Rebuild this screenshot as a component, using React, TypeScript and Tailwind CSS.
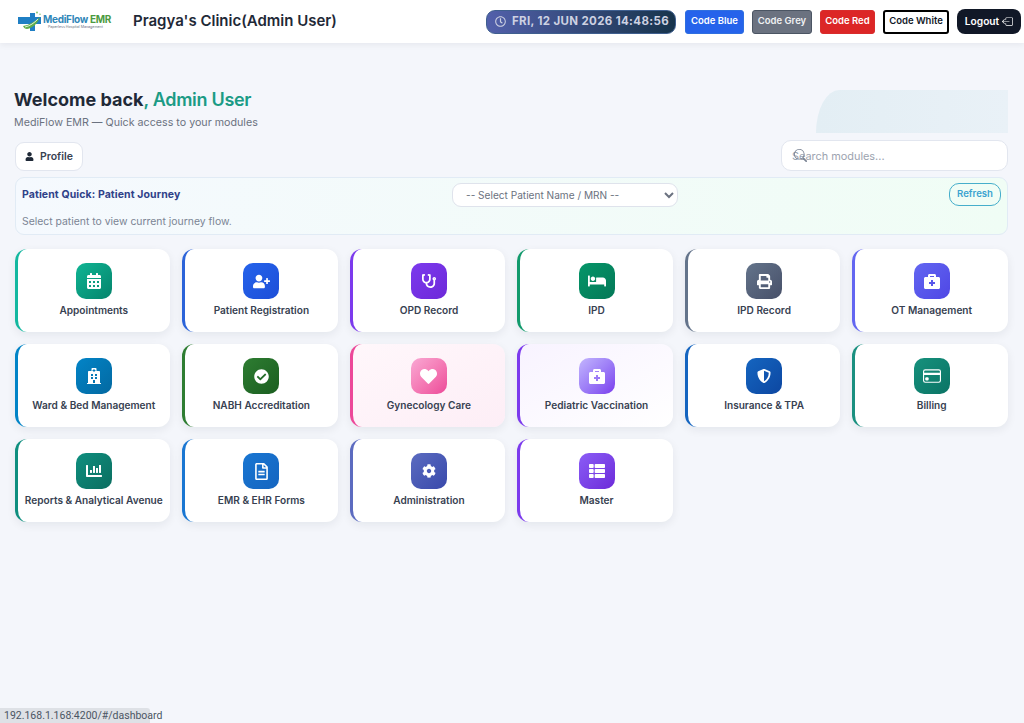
import type { IconType } from "react-icons";
import {
  FaBed,
  FaBriefcaseMedical,
  FaCalendarAlt,
  FaChartBar,
  FaCheckCircle,
  FaCog,
  FaHeart,
  FaHospital,
  FaPrint,
  FaRegClock,
  FaRegFileAlt,
  FaShieldAlt,
  FaStethoscope,
  FaThList,
  FaUser,
  FaUserPlus,
} from "react-icons/fa";
import { BsBoxArrowLeft, BsCreditCard, BsSearch } from "react-icons/bs";

type Module = {
  label: string;
  icon: IconType;
  size: number;
  border: string;
  tile: string;
  bg?: string;
};

const modules: Module[] = [
  { label: "Appointments", icon: FaCalendarAlt, size: 16, border: "border-l-[#14b8a0]", tile: "from-[#10b594] to-[#05846c]" },
  { label: "Patient Registration", icon: FaUserPlus, size: 17, border: "border-l-[#2b63d9]", tile: "from-[#2563eb] to-[#1d4ed8]" },
  { label: "OPD Record", icon: FaStethoscope, size: 14, border: "border-l-[#7c3aed]", tile: "from-[#7c3aed] to-[#6d28d9]" },
  { label: "IPD", icon: FaBed, size: 18, border: "border-l-[#129a6c]", tile: "from-[#059669] to-[#047857]" },
  { label: "IPD Record", icon: FaPrint, size: 15, border: "border-l-[#64748b]", tile: "from-[#64748b] to-[#475069]" },
  { label: "OT Management", icon: FaBriefcaseMedical, size: 16, border: "border-l-[#6366f1]", tile: "from-[#6366f1] to-[#4f46e5]" },
  { label: "Ward & Bed Management", icon: FaHospital, size: 16, border: "border-l-[#0284c7]", tile: "from-[#0284c7] to-[#0369a1]" },
  { label: "NABH Accreditation", icon: FaCheckCircle, size: 15, border: "border-l-[#2e7d32]", tile: "from-[#2e7d32] to-[#1b5e20]" },
  { label: "Gynecology Care", icon: FaHeart, size: 17, border: "border-l-[#ec4899]", tile: "from-[#f9a8d4] to-[#ec4899]", bg: "bg-gradient-to-br from-[#fff7fb] to-[#fdeef6]" },
  { label: "Pediatric Vaccination", icon: FaBriefcaseMedical, size: 16, border: "border-l-[#7c3aed]", tile: "from-[#c4b5fd] to-[#7c3aed]", bg: "bg-gradient-to-br from-[#f8f3ff] to-[#ffffff]" },
  { label: "Insurance & TPA", icon: FaShieldAlt, size: 14, border: "border-l-[#1565c0]", tile: "from-[#1565c0] to-[#0d47a1]" },
  { label: "Billing", icon: BsCreditCard, size: 18, border: "border-l-[#1a9080]", tile: "from-[#16917d] to-[#0b7465]" },
  { label: "Reports & Analytical Avenue", icon: FaChartBar, size: 16, border: "border-l-[#0f8f7f]", tile: "from-[#0f8f7f] to-[#0b6e60]" },
  { label: "EMR & EHR Forms", icon: FaRegFileAlt, size: 17, border: "border-l-[#1976d2]", tile: "from-[#1976d2] to-[#1565c0]" },
  { label: "Administration", icon: FaCog, size: 14, border: "border-l-[#5c6bc0]", tile: "from-[#5c6bc0] to-[#3949ab]" },
  { label: "Master", icon: FaThList, size: 16, border: "border-l-[#7c3aed]", tile: "from-[#8b5cf6] to-[#6d28d9]" },
];

function Logo() {
  return (
    <div className="flex w-[93px] items-center">
      <svg viewBox="0 0 25 21" className="h-[21px] w-[25px] shrink-0">
        <path d="M7 6h6V2h5v4h6v7h-6v7h-5v-7H1V6z" fill="#1f7fc4" />
        <path d="M6 15c6-1 11-4 17-9-2 6-7 11-13 12-2 0-3-1-4-3z" fill="#5fae4a" />
        <path d="M8 16c5-1 9-4 13-8" stroke="#ffffff" strokeWidth="0.8" fill="none" />
        <circle cx="20" cy="1.5" r="0.9" fill="#7cc35e" />
        <circle cx="23" cy="3.2" r="0.7" fill="#7cc35e" />
      </svg>
      <div className="ml-[1px] flex flex-col">
        <div className="whitespace-nowrap text-[10px] font-bold leading-[11px] tracking-[-0.3px]">
          <span className="text-[#2f86b8]">MediFlow </span>
          <span className="text-[#4c9a3f]">EMR</span>
        </div>
        <div className="whitespace-nowrap pl-[5px] text-[3.6px] leading-[5px] text-[#6b7280]">Paperless Hospital Management</div>
      </div>
    </div>
  );
}

function Header() {
  return (
    <header className="flex h-[43px] items-center justify-between bg-white pl-[17px] pr-[3px] shadow-[0_2px_6px_rgba(15,23,42,0.06)]">
      <div className="flex items-center gap-[23px]">
        <Logo />
        <div className="text-[15px] font-semibold text-[#1f2937]">Pragya's Clinic(Admin User)</div>
      </div>
      <div className="flex items-center gap-2 text-[9.5px] font-semibold">
        <div className="mr-[1px] flex h-[24px] w-[190px] items-center gap-[6px] rounded-[9px] border border-[#3f5f8f] bg-gradient-to-r from-[#5260ab] to-[#17344c] pl-[8px] text-[11.5px] font-bold tracking-[0.35px] text-[#cdd1e2]">
          <FaRegClock className="text-[11px]" />
          <span className="whitespace-nowrap">FRI, 12 JUN 2026 14:48:56</span>
        </div>
        <button className="h-[24px] w-[59px] rounded-[3px] border border-[#2f6fe0] bg-[#2563eb] text-white">Code Blue</button>
        <button className="h-[24px] w-[60px] rounded-[3px] border border-[#4b5563] bg-[#6b7280] text-[#f0f1f3]">Code Grey</button>
        <button className="h-[24px] w-[55px] rounded-[3px] border border-[#d92c2c] bg-[#dc2626] text-white">Code Red</button>
        <button className="h-[24px] w-[66px] rounded-[3px] border-2 border-black bg-white text-[#111827]">Code White</button>
        <button className="flex h-[25px] w-[64px] items-center justify-center gap-[3px] rounded-[8px] bg-[#111827] text-[10.2px] text-white">
          Logout
          <BsBoxArrowLeft className="text-[11px]" />
        </button>
      </div>
    </header>
  );
}

function ModuleCard({ item }: { item: Module }) {
  const Icon = item.icon;
  return (
    <div
      className={`flex h-[83px] flex-col items-center rounded-xl border-l-[3px] pt-[14px] shadow-[0_3px_10px_rgba(15,23,42,0.07)] ${item.border} ${item.bg ?? "bg-white"}`}
    >
      <div className={`flex h-[36px] w-[36px] items-center justify-center rounded-[10px] bg-gradient-to-br text-white ${item.tile}`}>
        <Icon size={item.size} />
      </div>
      <div className="mt-[4px] whitespace-nowrap text-[10.1px] font-semibold leading-[14px] text-[#374151]">{item.label}</div>
    </div>
  );
}

export default function App() {
  return (
    <div className="relative min-h-screen overflow-hidden bg-[#f4f6fb] font-['Inter',sans-serif]">
      <Header />
      <main className="relative pl-[14px] pr-[16px] pt-[48px]">
        <div className="absolute right-[16px] top-[47px] h-[43px] w-[192px] rounded-tl-[24px_44px] bg-gradient-to-r from-[#e3eef4] to-[#e9f1f7]" />
        <h1 className="relative text-[18px] font-bold leading-[18px] text-[#1f2937]">
          Welcome back<span className="font-semibold tracking-[-0.3px] text-[#1b9b85]">, Admin User</span>
        </h1>
        <p className="relative mt-[7px] text-[10.7px] leading-[14px] text-[#6b7280]">MediFlow EMR — Quick access to your modules</p>

        <div className="relative flex items-end justify-between">
          <button className="ml-[1px] flex h-[29px] w-[68px] items-center justify-center gap-[6px] rounded-[9px] border border-[#e2e6ef] bg-white text-[10.5px] font-semibold text-[#374151]">
            <FaUser className="text-[9px] text-[#1f2937]" />
            Profile
          </button>
          <div className="relative mt-[10px] h-[31px] w-[227px]">
            <input
              placeholder="Search modules..."
              className="h-full w-full rounded-[10px] border border-[#e2e6ef] bg-white pl-[10px] text-[10.9px] outline-none placeholder:text-[#9ca3af]"
            />
            <BsSearch className="absolute left-[13px] top-[9px] text-[13px] text-[#7b8494]" />
          </div>
        </div>

        <section className="ml-[1px] mt-[6px] h-[58px] rounded-[9px] border border-[#e1ebf5] bg-gradient-to-r from-[#f5f9fe] to-[#f0fdf5] pl-[6px] pr-[6px] pt-[5px]">
          <div className="flex items-start">
            <div className="w-[430px] pt-[5px] text-[10.5px] font-bold leading-[14px] tracking-[0.1px] text-[#2f4189]">Patient Quick: Patient Journey</div>
            <select className="h-[24px] w-[226px] rounded-[9px] border border-[#dfe3ec] bg-white pl-[9px] text-[10.1px] text-[#6b7280] outline-none">
              <option>-- Select Patient Name / MRN --</option>
            </select>
            <button className="ml-auto h-[23px] w-[52px] rounded-[10px] border border-[#46aecb] text-[9.6px] font-semibold text-[#3ba3d0]">Refresh</button>
          </div>
          <p className="mt-[8px] text-[10.4px] leading-[14px] text-[#7b8494]">Select patient to view current journey flow.</p>
        </section>

        <div className="ml-[0.5px] mt-[14px] grid grid-cols-6 gap-3">
          {modules.map((item) => (
            <ModuleCard key={item.label} item={item} />
          ))}
        </div>
      </main>
      <div className="absolute bottom-0 left-0 flex h-[15px] w-[150px] items-center rounded-tr-[3px] bg-[#dee1e6] pl-[4px] font-['Roboto',sans-serif] text-[10.5px] text-[#4b5563]">
        192.168.1.168:4200/#/dashboard
      </div>
    </div>
  );
}
